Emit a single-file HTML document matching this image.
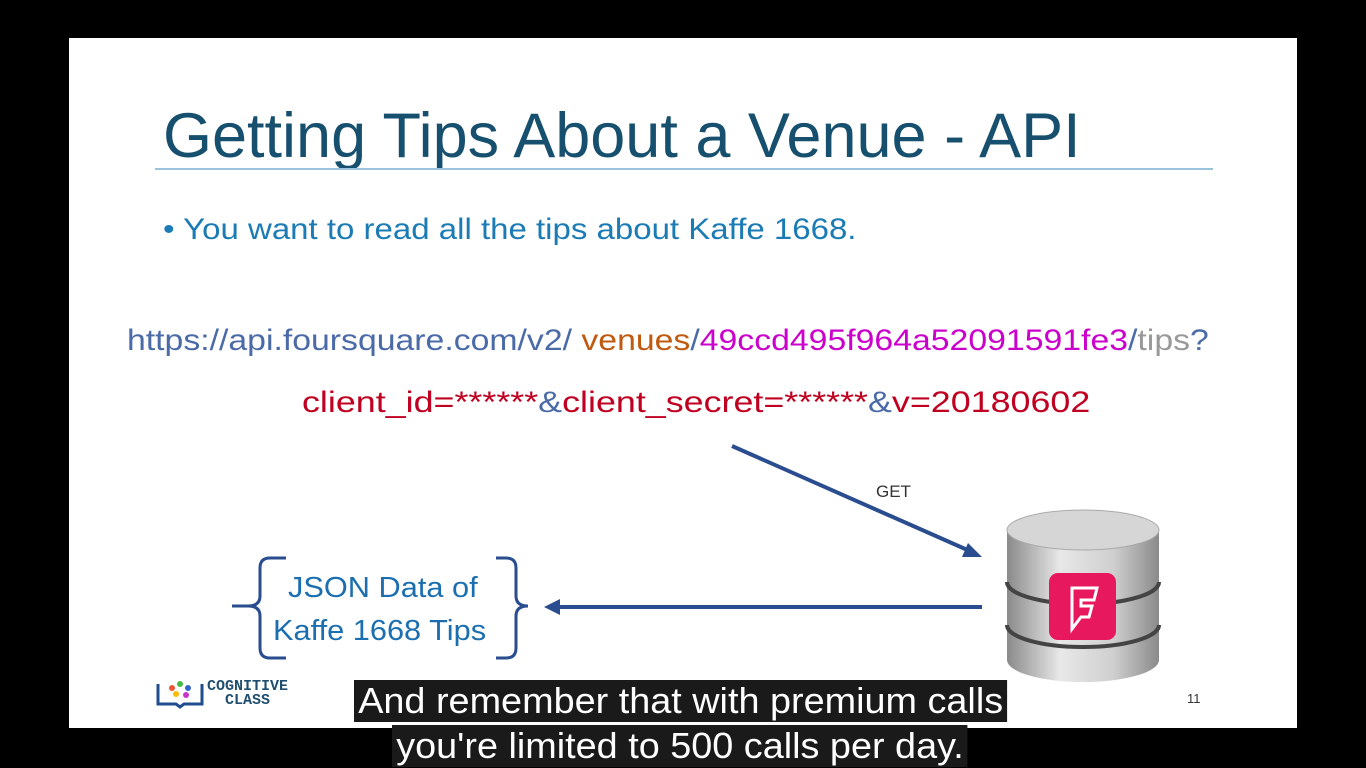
<!DOCTYPE html>
<html><head><meta charset="utf-8"><style>
body{margin:0;width:1366px;height:768px;background:#000;position:relative;overflow:hidden;font-family:"Liberation Sans",sans-serif}
.slide{position:absolute;left:69px;top:38px;width:1228px;height:690px;background:#fff}
.t{position:absolute;white-space:nowrap;transform-origin:0 0}
.sub{position:absolute;background:#1a1a1a;color:#fff;font-size:36px;line-height:42px;padding:0 4px;white-space:nowrap;transform-origin:0 0}
</style></head><body>
<div class="slide"></div>
<div class="t" style="left:163px;top:100px;font-size:63px;color:#17506e">Getting Tips About a Venue - API</div>
<div style="position:absolute;left:155px;top:168px;width:1058px;height:2px;background:#9cc3dc"></div>
<div class="t" style="left:163px;top:213px;font-size:30px;color:#1b7bb5;transform:scaleX(1.1)">• You want to read all the tips about Kaffe 1668.</div>
<div class="t" style="left:127px;top:324px;font-size:30px;color:#4a6aa8;transform:scaleX(1.126)">https://api.foursquare.com/v2/ <span style="color:#c05a10">venues</span>/<span style="color:#cc00cc">49ccd495f964a52091591fe3</span>/<span style="color:#999">tips</span>?</div>
<div class="t" style="left:302px;top:386px;font-size:30px;color:#c00020;transform:scaleX(1.195)">client_id=******<span style="color:#4a6aa8">&amp;</span>client_secret=******<span style="color:#4a6aa8">&amp;</span>v=20180602</div>
<div class="t" style="left:876px;top:482px;font-size:17px;color:#333">GET</div>
<svg style="position:absolute;left:0;top:0" width="1366" height="768">
<line x1="732" y1="446" x2="972" y2="552" stroke="#2a4d8f" stroke-width="4"/>
<polygon points="982,557 962,557 968,543" fill="#2a4d8f"/>
<line x1="982" y1="607" x2="556" y2="607" stroke="#2a4d8f" stroke-width="4"/>
<polygon points="544,607 560,599 560,615" fill="#2a4d8f"/>
<path d="M286,558 h-16 q-10,0 -10,10 v28 q0,10 -12,10 h-16 M248,606 q12,0 12,10 v32 q0,10 10,10 h16" fill="none" stroke="#2a4d8f" stroke-width="3"/>
<path d="M496,558 h10 q10,0 10,10 v28 q0,10 12,10 M528,606 q-12,0 -12,10 v32 q0,10 -10,10 h-10" fill="none" stroke="#2a4d8f" stroke-width="3"/>
<defs><linearGradient id="g" x1="0" x2="1"><stop offset="0" stop-color="#8a8a8a"/><stop offset="0.35" stop-color="#e8e8e8"/><stop offset="0.7" stop-color="#cfcfcf"/><stop offset="1" stop-color="#8a8a8a"/></linearGradient></defs>
<path d="M1007,530 v130 a76,22 0 0 0 152,0 v-130 z" fill="url(#g)"/>
<ellipse cx="1083" cy="530" rx="76" ry="20" fill="#d6d6d6" stroke="#aaa"/>
<path d="M1007,582 a76,22 0 0 0 152,0" fill="none" stroke="#444" stroke-width="4"/>
<path d="M1007,625 a76,22 0 0 0 152,0" fill="none" stroke="#444" stroke-width="4"/>
<rect x="1049" y="573" width="67" height="67" rx="9" fill="#e8185e"/>
<path d="M1072,588 h25 l-3,12 h-13 v6 h11 l-3,11 h-8 l-9,12 z" fill="none" stroke="#fff" stroke-width="3"/>
<g fill="none" stroke="#1f4e8e" stroke-width="3"><path d="M158,684 v20 h18 l4,3 l4,-3 h18 v-20"/></g>
<circle cx="172" cy="688" r="3" fill="#e53"/><circle cx="180" cy="684" r="3" fill="#4b4"/><circle cx="188" cy="688" r="3" fill="#36c"/><circle cx="176" cy="694" r="3" fill="#fb0"/><circle cx="186" cy="695" r="3" fill="#c3c"/>
</svg>
<div class="t" style="left:288px;top:572px;font-size:29px;color:#1b6fb0;transform:scaleX(1.06)">JSON Data of</div>
<div class="t" style="left:273px;top:615px;font-size:29px;color:#1b6fb0;transform:scaleX(1.06)">Kaffe 1668 Tips</div>
<div class="t" style="left:207px;top:680px;font-size:15px;line-height:14px;color:#1f4e6e;font-weight:bold;font-family:'Liberation Mono',monospace">COGNITIVE<br>&nbsp;&nbsp;CLASS</div>
<div class="t" style="left:1187px;top:691px;font-size:13px;color:#333">11</div>
<div class="sub" style="left:354px;top:680px;transform:scaleX(1.05)">And remember that with premium calls</div>
<div class="sub" style="left:392px;top:725px;transform:scaleX(1.05)">you're limited to 500 calls per day.</div>
</body></html>
